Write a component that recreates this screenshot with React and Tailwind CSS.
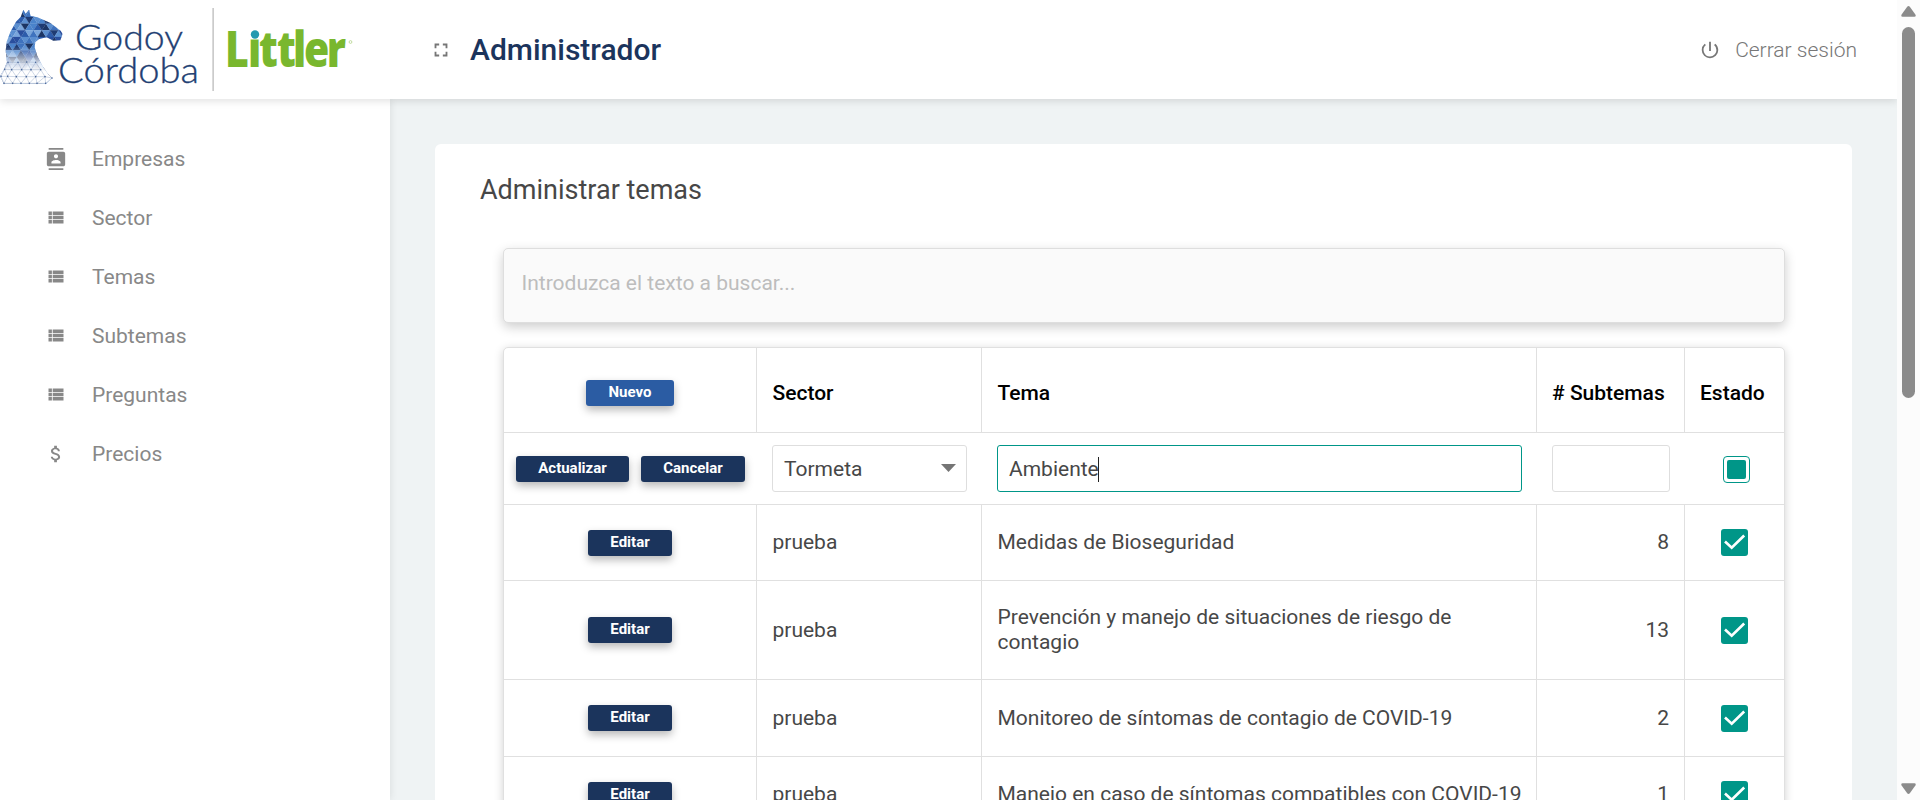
import React from "react";
import { MdFullscreen, MdPowerSettingsNew, MdContacts, MdAttachMoney } from "react-icons/md";

const MENU = [
  { label: "Empresas", icon: "contacts" },
  { label: "Sector", icon: "list" },
  { label: "Temas", icon: "list" },
  { label: "Subtemas", icon: "list" },
  { label: "Preguntas", icon: "list" },
  { label: "Precios", icon: "money" },
];

const ROWS = [
  { sector: "prueba", tema: "Medidas de Bioseguridad", count: 8, height: "h-[76px]" },
  { sector: "prueba", tema: "Prevención y manejo de situaciones de riesgo de contagio", count: 13, height: "h-[99px]" },
  { sector: "prueba", tema: "Monitoreo de síntomas de contagio de COVID-19", count: 2, height: "h-[77px]" },
  { sector: "prueba", tema: "Manejo en caso de síntomas compatibles con COVID-19", count: 1, height: "h-[76px]" },
];

const COLS = "grid grid-cols-[253px_225px_555px_148px_99px]";
const BLUES = ["#2a4f9e", "#5b8fd0", "#1f3b73", "#3f73be", "#7aa6dc", "#2d5cab", "#1c3564", "#4a83cb"];
const OUTLINE =
  "M48 65 62 51 70 29 77 41 87 29 92 48 112 52 150 68 162 77 182 92 188 102 181 121 160 122 140 112 118 117 106 126 104 142 112 168 126 196 144 222 157 235 138 251 12 251 0 229 13 206 21 186 17 152 20 125 31 96Z";

function buildMesh() {
  const out = [];
  const h = 20;
  const w = 25;
  for (let r = 0; r < 12; r++) {
    for (let c = -1; c < 17; c++) {
      const x = (c * w) / 2 + (r % 2 ? w / 2 : 0) - 12;
      const y = 11 + r * h;
      const up = c % 2 === 0;
      const points = up
        ? `${x},${y + h} ${x + w},${y + h} ${x + w / 2},${y}`
        : `${x},${y} ${x + w},${y} ${x + w / 2},${y + h}`;
      out.push({ points, fill: BLUES[(r * 5 + (c + 1) * 3 + ((r * c * c) % 7) + 8) % 8] });
    }
  }
  return out;
}
const MESH = buildMesh();

const NODES = [
  [24, 187], [54, 187], [80, 186], [107, 187],
  [14, 208], [35, 209], [65, 209], [93, 209], [122, 209],
  [3, 229], [23, 229], [49, 230], [79, 230], [107, 230], [135, 230], [156, 234],
  [12, 250], [38, 250], [63, 250], [88, 250], [111, 250], [137, 250],
];
const EDGES = NODES.flatMap((a, i) =>
  NODES.slice(i + 1)
    .filter((b) => Math.hypot(a[0] - b[0], a[1] - b[1]) < 32)
    .map((b) => [a, b])
);

function Logo() {
  return (
    <svg width="380" height="99" viewBox="0 0 380 99" className="block overflow-visible">
      <defs>
        <clipPath id="horse"><path d={OUTLINE} /></clipPath>
        <linearGradient id="fade" x1="0" y1="140" x2="0" y2="215" gradientUnits="userSpaceOnUse">
          <stop offset="0" stopColor="#fff" stopOpacity="0" />
          <stop offset="0.6" stopColor="#fff" stopOpacity="0.72" />
          <stop offset="1" stopColor="#fff" stopOpacity="1" />
        </linearGradient>
      </defs>
      <g transform="scale(0.33333)">
        <g clipPath="url(#horse)">
          {MESH.map((t, i) => <polygon key={i} points={t.points} fill={t.fill} stroke={t.fill} strokeWidth="0.6" />)}
          <rect x="0" y="140" width="200" height="120" fill="url(#fade)" />
        </g>
        {EDGES.map(([a, b], i) => (
          <line key={i} x1={a[0]} y1={a[1]} x2={b[0]} y2={b[1]} stroke="#8fa3c4" strokeWidth="1.3" />
        ))}
        {NODES.map(([x, y], i) => <circle key={i} cx={x} cy={y} r="2.4" fill="#4a6799" />)}
      </g>
      <g fill="#1f3f73" style={{ fontFamily: "Lato, sans-serif" }} fontWeight="300" stroke="#1f3f73" strokeWidth="0.35">
        <text x="75" y="50" fontSize="36" textLength="108" lengthAdjust="spacingAndGlyphs">Godoy</text>
        <text x="58" y="82.500" fontSize="36" textLength="141" lengthAdjust="spacingAndGlyphs">Córdoba</text>
      </g>
      <rect x="212.500" y="8" width="1.200" height="83" fill="#b5b5b5" />
      <text transform="scale(0.82 1)" x="274.400 302.500 315.900 337.800 357.300 370.700 398.600" y="67.500" fontSize="50" fontWeight="800" fill="#79b72e" style={{ fontFamily: '"Open Sans", sans-serif' }}>Littler</text>
      <rect x="247" y="26" width="14" height="13.500" fill="#fff" />
      <circle cx="255" cy="34.500" r="4.200" fill="#2499b0" />
      <circle cx="350.500" cy="42" r="1.400" fill="none" stroke="#a9cf7c" strokeWidth="0.700" />
    </svg>
  );
}

function MenuIcon({ kind }) {
  if (kind === "contacts") return <MdContacts size={22} />;
  if (kind === "money") return <MdAttachMoney size={22} />;
  return (
    <svg width="22" height="22" viewBox="0 0 22 22" fill="currentColor">
      <path d="M3.500 4.500h3.400v3.400H3.500zM7.700 4.500h10.800v3.400H7.700zM3.500 8.800h3.400v3.400H3.500zM7.700 8.800h10.800v3.400H7.700zM3.500 13.100h3.400v3.400H3.500zM7.700 13.100h10.800v3.400H7.700z" />
    </svg>
  );
}

function Button({ children, className }) {
  return (
    <button className={`flex h-[26px] shrink-0 items-center justify-center rounded-[3px] pb-px text-[15px] leading-none font-bold text-white shadow-[0_4px_9px_rgba(0,0,0,0.28)] ${className}`}>
      {children}
    </button>
  );
}

function Check() {
  return (
    <span className="flex h-[27px] w-[27px] rounded-[3px] bg-[#009688]">
      <svg width="27" height="27" viewBox="0 0 27 27" fill="none" stroke="#fff" strokeWidth="2.600">
        <path d="M4 12.500 10.700 18.800 23.200 6.500" />
      </svg>
    </span>
  );
}

function Cell({ children, className = "" }) {
  return <div className={`flex items-center border-r border-[#e0e0e0] ${className}`}>{children}</div>;
}

export default function App() {
  return (
    <div className="flex h-[800px] w-[1920px] overflow-hidden bg-[#eff3f4] text-[21px] leading-[25px] text-[#474747]" style={{ fontFamily: "Roboto, sans-serif" }}>
      <div className="flex w-[1897px] flex-col">
        <header className="relative z-20 flex h-[99px] shrink-0 items-center bg-white shadow-[0_2px_8px_rgba(0,0,0,0.12)]">
          <Logo />
          <MdFullscreen size={22} className="ml-[50px] text-[#777]" />
          <h1 className="ml-[18px] text-[30px] leading-[36px] font-medium text-[#1b345c]">Administrador</h1>
          <div className="mr-10 ml-auto flex items-center gap-[14px] font-light text-[#777]">
            <MdPowerSettingsNew size={22} />
            <span className="pt-px">Cerrar sesión</span>
          </div>
        </header>
        <div className="flex h-[701px]">
          <nav className="relative z-10 flex w-[390px] shrink-0 flex-col bg-white pt-[30px] text-[#888] shadow-[0_0_8px_rgba(0,0,0,0.10)]">
            {MENU.map((m) => (
              <a key={m.label} className="flex h-[59px] items-center gap-[25.500px] pl-[44.500px] text-[21px]">
                <MenuIcon kind={m.icon} />
                <span className="pt-px">{m.label}</span>
              </a>
            ))}
          </nav>
          <main className="mt-[45px] ml-[45px] h-[700px] w-[1417px] shrink-0 rounded-[6px] bg-white pt-[29px] pl-[68px]">
            <h2 className="-ml-[23px] text-[27px] leading-[34px]">Administrar temas</h2>
            <div className="mt-[41px] flex h-[75px] w-[1282px] items-center rounded-[5px] border border-[#dedede] bg-[#fafafa] pb-1 pl-[17.500px] text-[#bdbdbd] shadow-[0_4px_12px_rgba(0,0,0,0.2)]">
              Introduzca el texto a buscar...
            </div>
            <div className="mt-6 h-[520px] w-[1282px] rounded-[5px] border border-[#e0e0e0] bg-white shadow-[0_2px_10px_rgba(0,0,0,0.18)]">
              <div className={`${COLS} h-[85px] border-b border-[#e0e0e0] font-medium text-black`}>
                <Cell className="justify-center pt-[6px]"><Button className="w-[88px] bg-[#2b5ca3]">Nuevo</Button></Cell>
                <Cell className="pt-[7px] pl-[15.500px]">Sector</Cell>
                <Cell className="pt-[7px] pl-[15.500px]">Tema</Cell>
                <Cell className="pt-[7px] pl-[15px]"># Subtemas</Cell>
                <div className="flex items-center pt-[7px] pl-[15px]">Estado</div>
              </div>
              <div className={`${COLS} h-[72px] items-center border-b border-[#e0e0e0]`}>
                <div className="flex gap-3 pl-3">
                  <Button className="w-[113px] bg-[#1b345c]">Actualizar</Button>
                  <Button className="w-[104px] bg-[#1b345c]">Cancelar</Button>
                </div>
                <div className="ml-[15px] flex h-[47px] w-[195px] items-center justify-between rounded-[3px] border border-[#dedede] pt-[2px] pr-[10px] pl-[11px]">
                  <span>Tormeta</span>
                  <svg width="15" height="8" viewBox="0 0 15 8" className="mb-1" fill="#757575"><path d="M0 0h15L7.500 8z" /></svg>
                </div>
                <div className="ml-[15px] flex h-[47px] w-[525px] items-center rounded-[3px] border border-[#009688] pt-[2px] pl-[11px]">
                  <span>Ambiente</span>
                  <span className="-ml-px h-[25px] w-px bg-[#222]" />
                </div>
                <div className="ml-[15px] h-[47px] w-[118px] rounded-[3px] border border-[#dedede]" />
                <div className="flex pt-px pl-[38px]">
                  <span className="flex h-[27px] w-[27px] items-center justify-center rounded-[4px] border-[1.500px] border-[#009688]">
                    <span className="h-[19px] w-[19px] rounded-[2px] bg-[#009688]" />
                  </span>
                </div>
              </div>
              {ROWS.map((r, i) => (
                <div key={i} className={`${COLS} ${r.height} border-b border-[#e0e0e0]`}>
                  <Cell className="justify-center"><Button className="w-[84px] bg-[#1b345c]">Editar</Button></Cell>
                  <Cell className="pl-[15.500px]">{r.sector}</Cell>
                  <Cell className="pr-[13px] pl-[15.500px]">{r.tema}</Cell>
                  <Cell className="justify-end pr-[15px]">{r.count}</Cell>
                  <div className="flex items-center pl-9"><Check /></div>
                </div>
              ))}
            </div>
          </main>
        </div>
      </div>
      <div className="relative z-30 flex w-[23px] flex-col items-center bg-[#fcfcfc] pt-[6px] pb-[6px]">
        <svg width="15" height="11" viewBox="0 0 15 11" fill="#8b8b8b"><path d="M6.200.8q1.300-1.500 2.600 0l5.600 7.700q1 2.200-1 2.300H1.600q-2-.1-1-2.300z" /></svg>
        <div className="mt-[10px] h-[371px] w-[13px] rounded-full bg-[#8b8b8b]" />
        <svg width="15" height="11" viewBox="0 0 15 11" fill="#8b8b8b" className="mt-auto"><path d="M6.200 10.200q1.300 1.500 2.600 0l5.600-7.700q1-2.200-1-2.300H1.600q-2 .1-1 2.300z" /></svg>
      </div>
    </div>
  );
}
